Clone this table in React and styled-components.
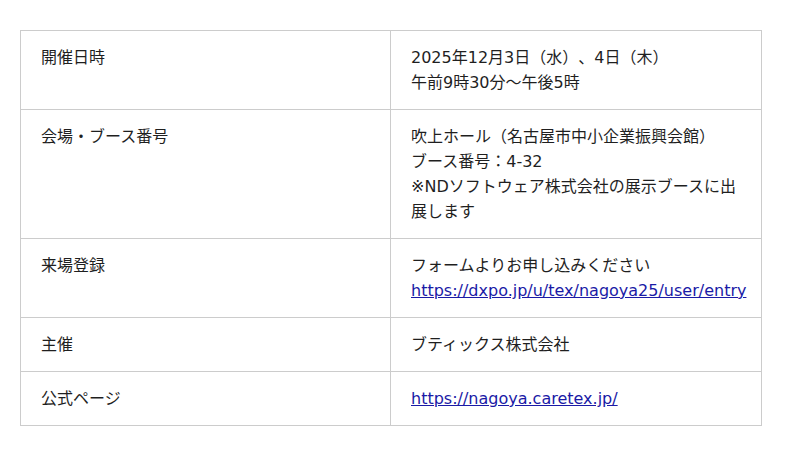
import styled, { createGlobalStyle } from 'styled-components';

const GlobalStyle = createGlobalStyle`
  body {
    margin: 0;
    background: #fff;
    font-family: "DejaVu Sans", "Noto Sans CJK JP", sans-serif;
    color: #1f1f1f;
  }
`;

const Page = styled.div`
  padding: 30px 20px;
`;

const Table = styled.table`
  width: 742px;
  border-collapse: collapse;
  table-layout: fixed;
  font-size: 16px;
  line-height: 25px;
  text-spacing-trim: space-all;
`;

const Cell = styled.td`
  border: 1px solid #ccc;
  padding: 14px 20px;
  vertical-align: top;
  width: ${(p) => (p.$head ? '329px' : 'auto')};
`;

const Link = styled.a`
  color: #1a1aa6;
  text-decoration: underline;
`;

const rows = [
  ['開催日時', <>2025年12月3日（水）、4日（木）<br />午前9時30分～午後5時</>],
  ['会場・ブース番号', <>吹上ホール（名古屋市中小企業振興会館）<br />ブース番号：4-32<br />※NDソフトウェア株式会社の展示ブースに出展します</>],
  ['来場登録', <>フォームよりお申し込みください<br /><Link href="#">https://dxpo.jp/u/tex/nagoya25/user/entry</Link></>],
  ['主催', 'ブティックス株式会社'],
  ['公式ページ', <Link href="#">https://nagoya.caretex.jp/</Link>],
];

export default function App() {
  return (
    <Page>
      <GlobalStyle />
      <Table>
        <tbody>
          {rows.map(([k, v]) => (
            <tr key={k}>
              <Cell $head>{k}</Cell>
              <Cell>{v}</Cell>
            </tr>
          ))}
        </tbody>
      </Table>
    </Page>
  );
}
